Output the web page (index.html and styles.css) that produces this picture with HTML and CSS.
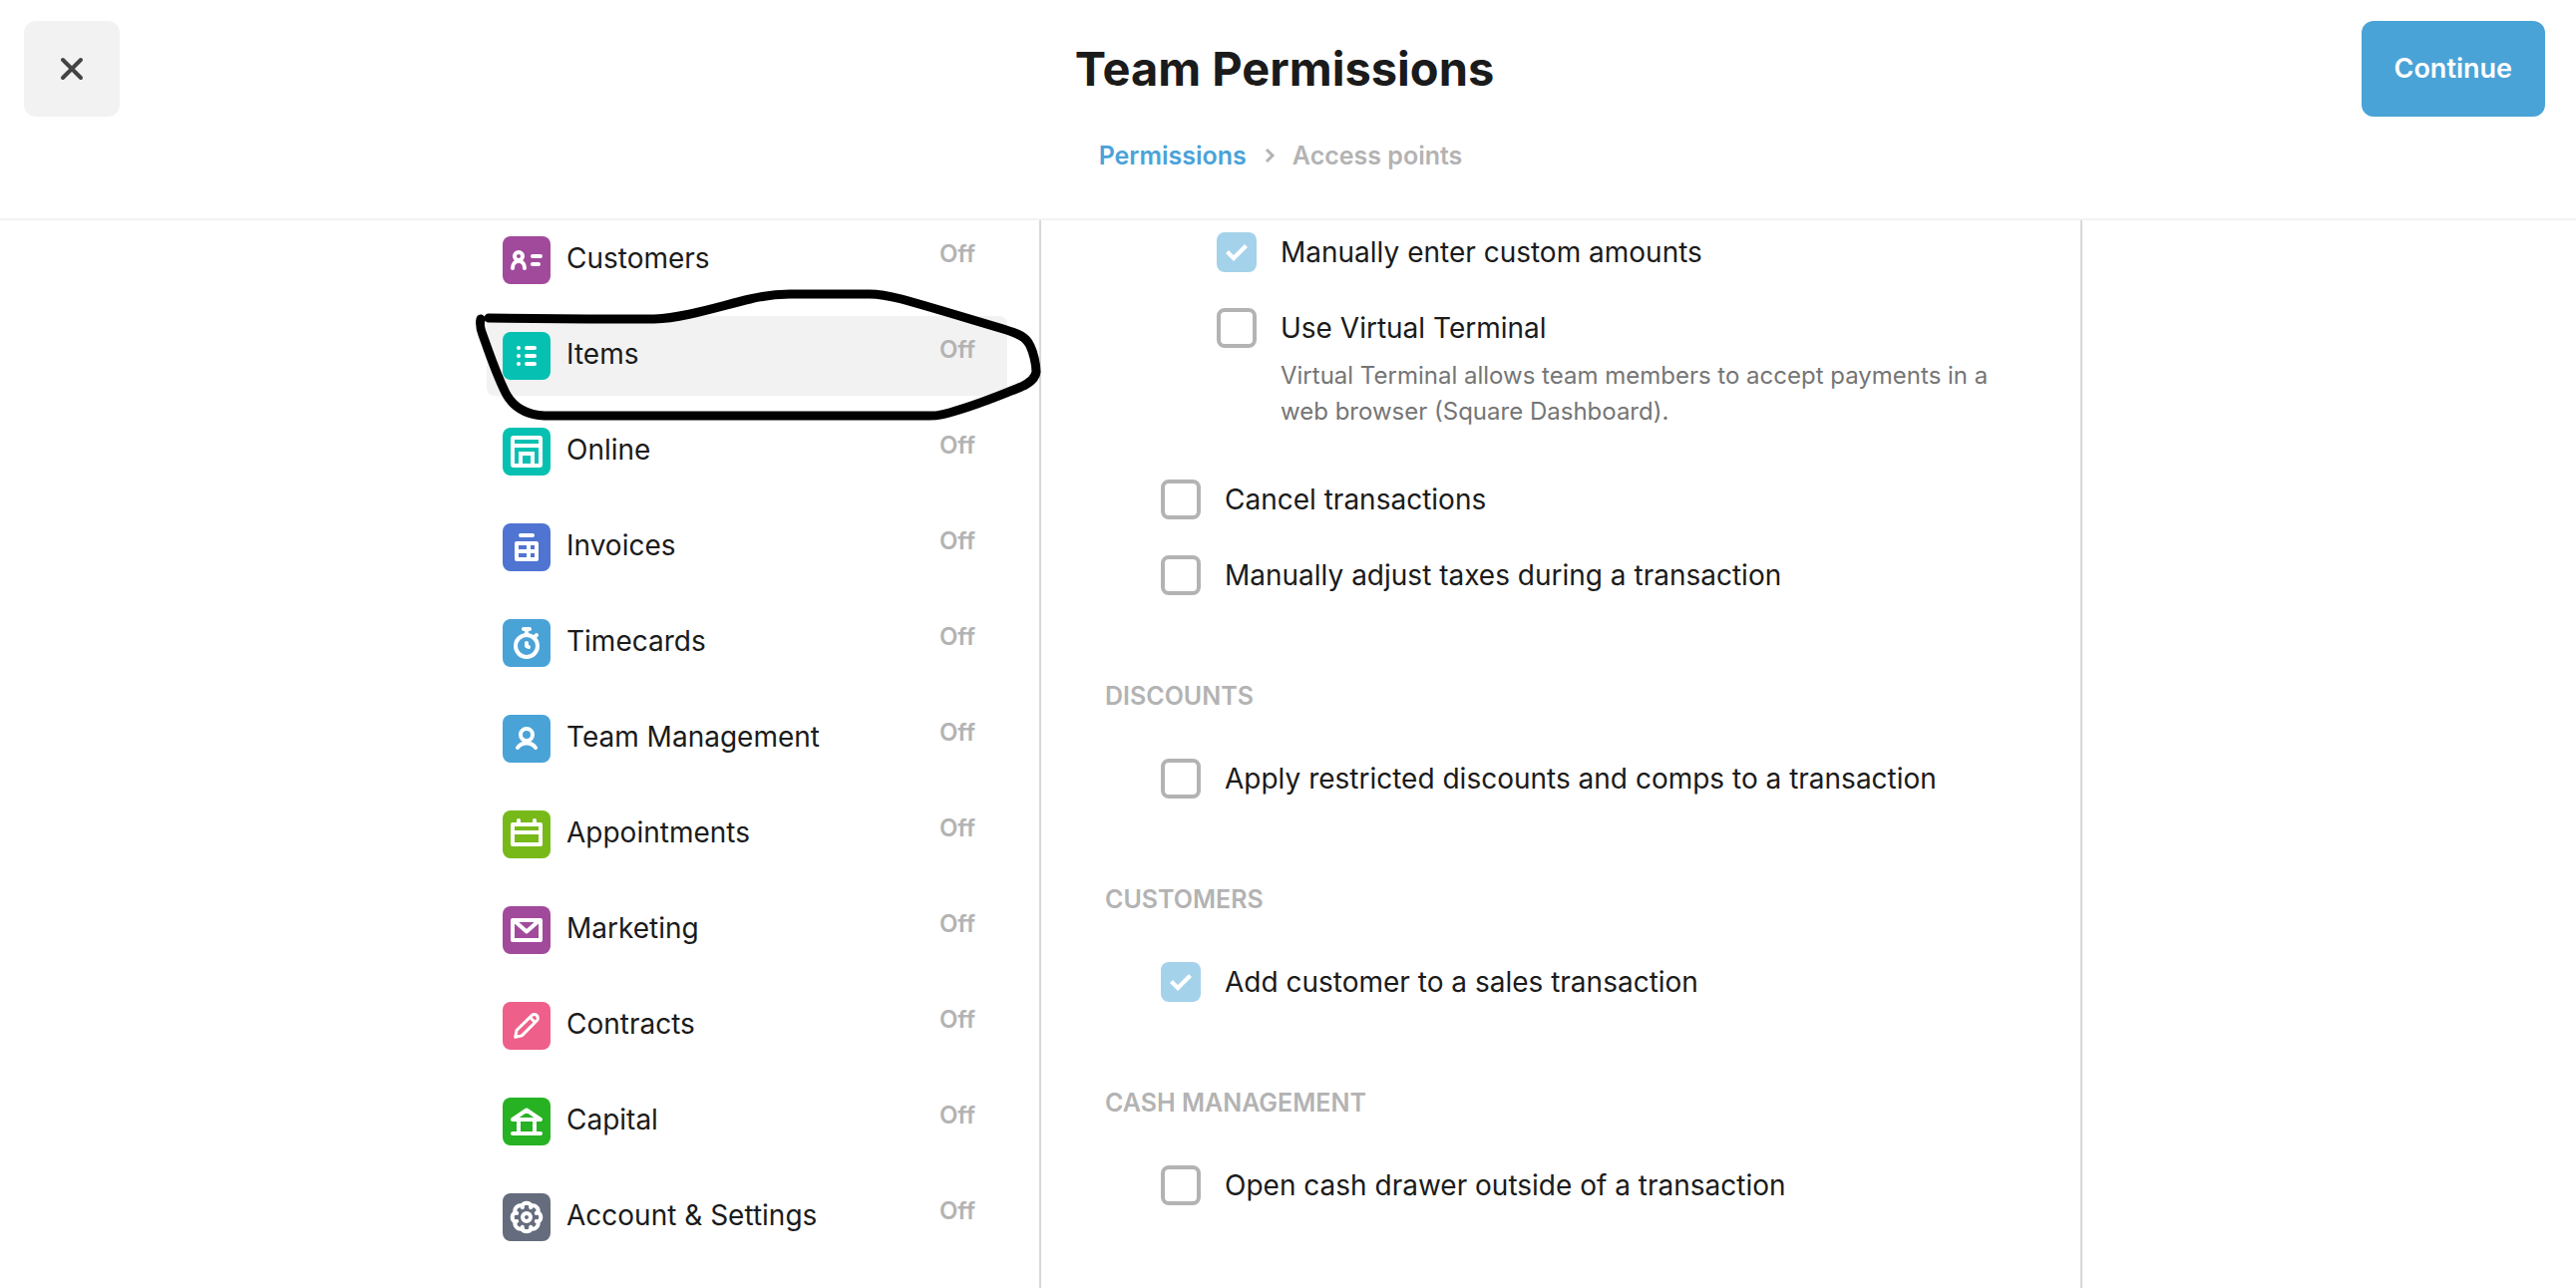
FILE: index.html
```html
<!DOCTYPE html>
<html lang="en">
<head>
<meta charset="utf-8">
<meta name="viewport" content="width=device-width, initial-scale=1">
<title>Team Permissions</title>
<link rel="stylesheet" href="styles.css">
</head>
<body>
<header class="header">
  <div class="header-bar">
    <button class="btn btn-close" type="button" aria-label="Close">
      <svg class="close-icon" viewBox="0 0 24 24" aria-hidden="true"><path d="M3 3l18 18M21 3L3 21"/></svg>
    </button>
    <h1 class="title">Team Permissions</h1>
    <button class="btn btn-primary" type="button">Continue</button>
  </div>
  <nav class="breadcrumb" aria-label="Breadcrumb">
    <a class="crumb crumb-link" href="#permissions">Permissions</a>
    <svg class="crumb-arrow" viewBox="0 0 12 16" aria-hidden="true"><path d="M3 2l6 6-6 6"/></svg>
    <span class="crumb">Access points</span>
  </nav>
</header>

<div class="page">
<main class="main">
  <nav class="sidebar" aria-label="Access points">
    <ul class="nav-list">
      <li class="nav-item">
        <a class="nav-link" href="#customers">
          <svg class="nav-icon purple" viewBox="0 0 48 48" aria-hidden="true"><circle cx="16" cy="20" r="4"/><path d="M10 32c0-5 3-7 6-7s6 2 6 7M30 20h8M30 28h6"/></svg>
          <span class="nav-label">Customers</span><span class="nav-state">Off</span>
        </a>
      </li>
      <li class="nav-item">
        <a class="nav-link active" href="#items">
          <svg class="nav-icon teal" viewBox="0 0 48 48" aria-hidden="true"><path d="M16 16h0M16 24h0M16 32h0M24 16h8M24 24h8M24 32h8"/></svg>
          <span class="nav-label">Items</span><span class="nav-state">Off</span>
        </a>
        <svg class="ink" viewBox="472 285 580 144" aria-hidden="true"><path d="M490 319L590 320L656 320C686 319 722 307 752 300C768 296 778 295 792 295L872 295C882 295 892 297 904 300C940 310 972 320 1006 330C1022 335 1029 338 1033 347C1036 353 1039 365 1039 373C1038 380 1033 384 1024 388C1000 398 974 408 952 414C942 417 938 417 928 417L546 417C526 416 515 408 508 396C498 377 491 355 484 336C481 328 481 325 482 320"/></svg>
      </li>
      <li class="nav-item">
        <a class="nav-link" href="#online">
          <svg class="nav-icon teal" viewBox="0 0 48 48" aria-hidden="true"><rect x="10" y="10" width="28" height="28" rx="1"/><path class="butt" d="M10 18h28M18 36V26h12v10"/></svg>
          <span class="nav-label">Online</span><span class="nav-state">Off</span>
        </a>
      </li>
      <li class="nav-item">
        <a class="nav-link" href="#invoices">
          <svg class="nav-icon indigo" viewBox="0 0 48 48" aria-hidden="true"><path d="M18 12h12"/><rect x="14" y="20" width="20" height="16"/><path class="butt" d="M14 28h20M26 20v16"/></svg>
          <span class="nav-label">Invoices</span><span class="nav-state">Off</span>
        </a>
      </li>
      <li class="nav-item">
        <a class="nav-link" href="#timecards">
          <svg class="nav-icon blue" viewBox="0 0 48 48" aria-hidden="true"><circle cx="24" cy="27" r="11"/><path d="M21 10h6M24 10v6M32 18l2-2M24 24v3l2 1"/></svg>
          <span class="nav-label">Timecards</span><span class="nav-state">Off</span>
        </a>
      </li>
      <li class="nav-item">
        <a class="nav-link" href="#team">
          <svg class="nav-icon blue" viewBox="0 0 48 48" aria-hidden="true"><circle cx="24" cy="20" r="6"/><path d="M15 33c2-3 5.500-4.500 9-4.500s7 1.500 9 4.500"/></svg>
          <span class="nav-label">Team Management</span><span class="nav-state">Off</span>
        </a>
      </li>
      <li class="nav-item">
        <a class="nav-link" href="#appointments">
          <svg class="nav-icon lime" viewBox="0 0 48 48" aria-hidden="true"><rect x="10" y="14" width="28" height="20"/><path d="M16 10v4M32 10v4M10 22h28"/></svg>
          <span class="nav-label">Appointments</span><span class="nav-state">Off</span>
        </a>
      </li>
      <li class="nav-item">
        <a class="nav-link" href="#marketing">
          <svg class="nav-icon purple" viewBox="0 0 48 48" aria-hidden="true"><rect x="10" y="14" width="28" height="20"/><path d="M11 14l13 11.500L37 14"/></svg>
          <span class="nav-label">Marketing</span><span class="nav-state">Off</span>
        </a>
      </li>
      <li class="nav-item">
        <a class="nav-link" href="#contracts">
          <svg class="nav-icon pink thin" viewBox="0 0 48 48" aria-hidden="true"><path d="M12.700 35.300l1.300-6.800L29.200 13.600a3.600 3.600 0 0 1 5.100 5.100L19.300 33.900zM27.500 15.500l5 5"/></svg>
          <span class="nav-label">Contracts</span><span class="nav-state">Off</span>
        </a>
      </li>
      <li class="nav-item">
        <a class="nav-link" href="#capital">
          <svg class="nav-icon green" viewBox="0 0 48 48" aria-hidden="true"><path d="M10 22l14-9.500L38 22zM16 22v14M32 22v14M10 36h28"/></svg>
          <span class="nav-label">Capital</span><span class="nav-state">Off</span>
        </a>
      </li>
      <li class="nav-item">
        <a class="nav-link" href="#account">
          <svg class="nav-icon slate" viewBox="0 0 48 48" aria-hidden="true"><circle cx="24" cy="24" r="4"/><path d="M28.800 12.500A5.500 5.500 0 0 1 35.500 19.200A5.500 5.500 0 0 1 35.500 28.800A5.500 5.500 0 0 1 28.800 35.500A5.500 5.500 0 0 1 19.200 35.500A5.500 5.500 0 0 1 12.500 28.800A5.500 5.500 0 0 1 12.500 19.200A5.500 5.500 0 0 1 19.200 12.500A5.500 5.500 0 0 1 28.800 12.500z"/><path d="M28.800 12.500l-.7 1.700M35.500 19.200l-1.700.7M35.500 28.800l-1.700-.7M28.800 35.500l-.7-1.700M19.200 35.500l.7-1.700M12.500 28.800l1.700-.7M12.500 19.200l1.700.7M19.200 12.500l.7 1.700"/></svg>
          <span class="nav-label">Account &amp; Settings</span><span class="nav-state">Off</span>
        </a>
      </li>
    </ul>
  </nav>

  <div class="content">
    <section class="group">
      <div class="options nested">
        <div class="option">
          <input class="check" type="checkbox" id="custom-amounts" checked disabled>
          <label class="option-label" for="custom-amounts">Manually enter custom amounts</label>
        </div>
        <div class="option">
          <input class="check" type="checkbox" id="virtual-terminal" aria-describedby="virtual-terminal-note">
          <label class="option-label" for="virtual-terminal">Use Virtual Terminal</label>
          <p class="note" id="virtual-terminal-note">Virtual Terminal allows team members to accept payments in a web browser (Square Dashboard).</p>
        </div>
      </div>
      <div class="options">
        <div class="option">
          <input class="check" type="checkbox" id="cancel">
          <label class="option-label" for="cancel">Cancel transactions</label>
        </div>
        <div class="option">
          <input class="check" type="checkbox" id="taxes">
          <label class="option-label" for="taxes">Manually adjust taxes during a transaction</label>
        </div>
      </div>
    </section>
    <section class="group">
      <h2 class="group-title">Discounts</h2>
      <div class="options">
        <div class="option">
          <input class="check" type="checkbox" id="discounts">
          <label class="option-label" for="discounts">Apply restricted discounts and comps to a transaction</label>
        </div>
      </div>
    </section>
    <section class="group">
      <h2 class="group-title">Customers</h2>
      <div class="options">
        <div class="option">
          <input class="check" type="checkbox" id="add-customer" checked disabled>
          <label class="option-label" for="add-customer">Add customer to a sales transaction</label>
        </div>
      </div>
    </section>
    <section class="group">
      <h2 class="group-title">Cash management</h2>
      <div class="options">
        <div class="option">
          <input class="check" type="checkbox" id="cash-drawer">
          <label class="option-label" for="cash-drawer">Open cash drawer outside of a transaction</label>
        </div>
      </div>
    </section>
  </div>
</main>
</div>
</body>
</html>
```
FILE: styles.css
```css
* { box-sizing: border-box; }

body {
  margin: 0;
  min-height: 100vh;
  display: flex;
  flex-direction: column;
  background: #fff;
  color: #1b1b1b;
  font: 400 28px/40px Inter, "Liberation Sans", sans-serif;
}

h1, h2, p, ul { margin: 0; padding: 0; }

/* Header */
.header {
  padding: 21px 31px 44px 24px;
  border-bottom: 2px solid #f2f2f2;
}
.header-bar {
  display: grid;
  grid-template-columns: 1fr auto 1fr;
  align-items: center;
}
.btn {
  height: 96px;
  padding: 0 33px;
  border: 0;
  border-radius: 12px;
  font: 600 27px/40px Inter, "Liberation Sans", sans-serif;
  cursor: pointer;
}
.btn-close {
  display: flex;
  align-items: center;
  justify-content: center;
  width: 96px;
  background: #f2f2f2;
}
.close-icon {
  flex: none;
  width: 24px;
  height: 24px;
  fill: none;
  stroke: #444;
  stroke-width: 4;
  stroke-linecap: round;
}
.btn-primary {
  justify-self: end;
  background: #4aa3d7;
  color: #fff;
}
.title {
  font-size: 47px;
  line-height: 56px;
  font-weight: 700;
}
.breadcrumb {
  display: flex;
  align-items: center;
  justify-content: center;
  gap: 17px;
  margin-top: 20px;
  padding-right: 8px;
  font-size: 25px;
  line-height: 38px;
  font-weight: 600;
}
.crumb { color: #b3b3b3; }
.crumb-link { color: #4aa3d7; text-decoration: none; }
.crumb-arrow {
  width: 12px;
  height: 16px;
  fill: none;
  stroke: #b3b3b3;
  stroke-width: 3;
}

/* Two-column body */
.page {
  flex: 1;
  display: flex;
  justify-content: center;
  padding-right: 7px;
}
.main {
  display: grid;
  grid-template-columns: 554fr 1046fr;
  width: 100%;
  max-width: 1600px;
}

/* Sidebar */
.sidebar { padding-right: 32px; }
.nav-list {
  display: flex;
  flex-direction: column;
  gap: 16px;
  list-style: none;
}
.nav-item { position: relative; }
.nav-link {
  display: flex;
  align-items: flex-start;
  gap: 16px;
  padding: 16px 32px 16px 16px;
  border-radius: 8px;
  color: inherit;
  text-decoration: none;
}
.nav-link.active { background: #f2f2f2; }
.nav-label { flex: 1; line-height: 44px; }
.nav-state {
  color: #b3b3b3;
  font-size: 24px;
  line-height: 36px;
  font-weight: 600;
}
.nav-icon {
  flex: none;
  width: 48px;
  height: 48px;
  border-radius: 8px;
  fill: none;
  stroke: #fff;
  stroke-width: 4;
  stroke-linecap: round;
  stroke-linejoin: round;
}
.nav-icon.thin { stroke-width: 3; }
.nav-icon .butt { stroke-linecap: butt; stroke-linejoin: miter; }
.purple { background: #a14a9c; }
.teal { background: #06c1b2; }
.indigo { background: #4f74d2; }
.blue { background: #4aa3d7; }
.lime { background: #78b91a; }
.pink { background: #ee5f8a; }
.green { background: #27b223; }
.slate { background: #646c7d; }

/* Hand-drawn marker ring around the selected item */
.ink {
  position: absolute;
  z-index: 1;
  left: -16px;
  top: -32px;
  width: 580px;
  height: 144px;
  fill: none;
  stroke: #000;
  stroke-width: 9;
  stroke-linecap: round;
  stroke-linejoin: round;
  pointer-events: none;
}

/* Permission options */
.content {
  padding: 12px 64px 83px;
  border: solid #d8d8d8;
  border-width: 0 2px;
}
.group + .group { margin-top: 86px; }
.group-title {
  margin-bottom: 48px;
  color: #b3b3b3;
  font-size: 25px;
  line-height: 30px;
  font-weight: 600;
  text-transform: uppercase;
}
.options {
  display: flex;
  flex-direction: column;
  gap: 36px;
  padding-left: 56px;
}
.options.nested { padding-left: 112px; }
.options + .options { margin-top: 50px; }
.option {
  display: grid;
  grid-template-columns: 40px 1fr;
  column-gap: 24px;
}
.check {
  appearance: none;
  width: 40px;
  height: 40px;
  margin: 0;
  border: 4px solid #b3b3b3;
  border-radius: 8px;
}
.check:checked {
  border: 0;
  background: #a4d2ea;
}
.check:checked::before {
  content: "";
  display: block;
  width: 40px;
  height: 40px;
  background: #fff;
  clip-path: polygon(9px 21px, 12px 18px, 17px 23px, 28px 12px, 31px 15px, 17px 29px);
}
.note {
  grid-column: 2;
  max-width: 740px;
  margin-top: 10px;
  color: #757575;
  font-size: 24px;
  line-height: 36px;
}
```
